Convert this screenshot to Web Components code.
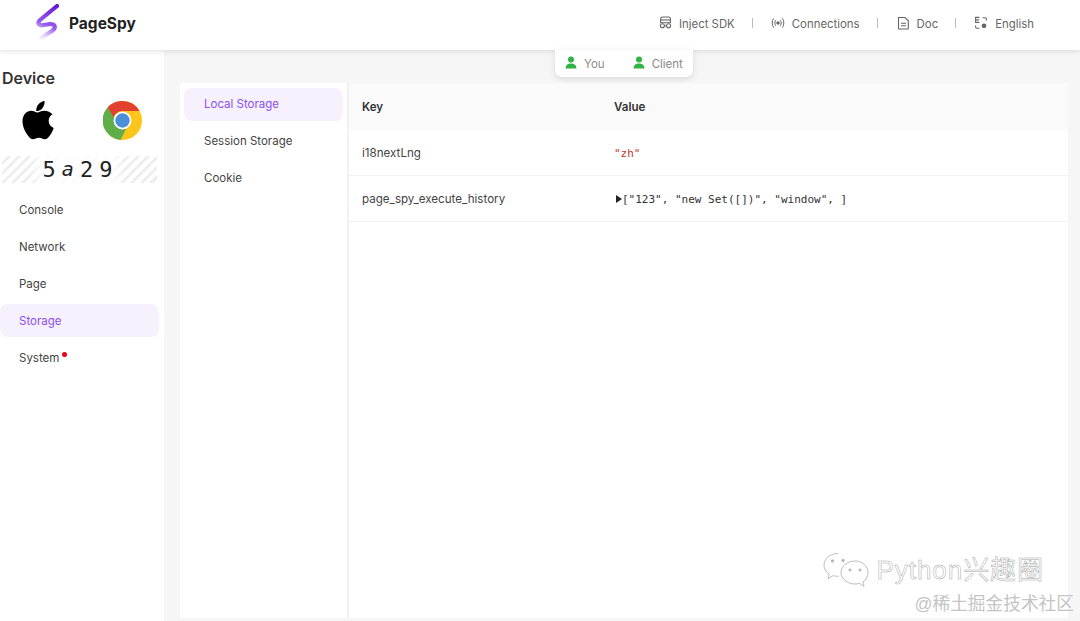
<!DOCTYPE html>
<html><head><meta charset="utf-8"><style>
html,body{margin:0;padding:0;height:100%}
body{width:1080px;height:621px;overflow:hidden;background:#f6f6f6;font-family:Inter,"Liberation Sans",sans-serif;color:#333}
</style></head><body>
<spy-app></spy-app>
<script>
const ICONS={
sdk:'<svg width="13" height="13" viewBox="0 0 13 13" fill="none" stroke="#666" stroke-width="1.1"><path d="M1.600 6.800V3a2 2 0 0 1 2-2h5.800a2 2 0 0 1 2 2v3.800z"/><path d="M1.600 4h9.800"/><circle cx="3.400" cy="9.800" r="2"/><circle cx="9.600" cy="9.800" r="2"/><path d="M5.400 9.800h2.200"/></svg>',
conn:'<svg width="14" height="14" viewBox="0 0 14 14" fill="none" stroke="#666" stroke-width="1"><path d="M2.600 2.400C.7 5 .7 9 2.600 11.600M11.400 2.400c1.900 2.600 1.900 6.600 0 9.200M4.700 4.200c-1.100 1.700-1.100 3.900 0 5.600M9.300 4.200c1.100 1.700 1.100 3.900 0 5.600"/><circle cx="7" cy="7" r="1.200" fill="#666"/></svg>',
doc:'<svg width="13" height="14" viewBox="0 0 13 14" fill="none" stroke="#666" stroke-width="1.1"><path d="M1.500 1.500h6.500l3.300 3.300v7.400a.8.8 0 0 1-.8.8H2.300a.8.8 0 0 1-.8-.8z"/><path d="M4 7.200h5M4 9.800h5"/></svg>',
lang:'<svg width="14" height="14" viewBox="0 0 14 14" fill="none" stroke="#666" stroke-width="1.1"><path d="M5.400 1.400H1.600v5h3.800M1.600 3.900h3.400M8.600 1.800h2.600a1.200 1.200 0 0 1 1.200 1.200v1.400M5.400 12.200H2.800a1.200 1.200 0 0 1-1.200-1.200V9.400"/><circle cx="10" cy="9.800" r="2.400" fill="#666" stroke="none"/></svg>'};
function def(name,css,html){
  customElements.define(name,class extends HTMLElement{
    constructor(){super();const r=this.attachShadow({mode:'open'});
      r.innerHTML='<style>'+css+'</style>'+(typeof html==='function'?html(this):html);}
  });
}
def('spy-logo',':host{display:flex;align-items:center;gap:10px;padding-left:36px}b{font:700 15.5px Inter,"Liberation Sans",sans-serif;color:#222}svg{display:block;margin-top:-3px}',
`<svg width="23" height="36" viewBox="0 0 23 36" fill="none" stroke-linecap="round" stroke-linejoin="round"><defs><linearGradient id="g" gradientUnits="userSpaceOnUse" x1="5" y1="35" x2="21" y2="2"><stop offset="0" stop-color="#c9aef5" stop-opacity=".15"/><stop offset=".4" stop-color="#9a5cf0"/><stop offset="1" stop-color="#6518d6"/></linearGradient></defs><path d="M21 2 4 16C0 20 4 22 8 21L14 20C20 20 20 24 16 27L5 34" stroke="url(#g)" stroke-width="4.200"/></svg><b>PageSpy</b>`);
def('nav-item',':host{display:flex;align-items:center;gap:7px;font-size:11.4px;color:#666}span{display:block}svg{display:block;margin-top:-2px}',
 h=>ICONS[h.getAttribute('icon')]+'<span><slot></slot></span>');
def('spy-header',':host{display:flex;justify-content:space-between;align-items:center;height:50px;padding-bottom:4px;background:#fff;box-shadow:0 1px 6px rgba(0,0,0,.13);position:relative;z-index:2;box-sizing:border-box}.n{display:flex;align-items:center;padding-right:46px;margin-top:1px}i{display:block;width:1px;height:10px;background:#bbb;margin:-1px 0 0 0}',
 `<spy-logo></spy-logo><div class="n"><nav-item icon="sdk">Inject SDK</nav-item><i style="margin-left:17px;margin-right:18px"></i><nav-item icon="conn">Connections</nav-item><i style="margin-left:17px;margin-right:19px"></i><nav-item icon="doc">Doc</nav-item><i style="margin-left:17px;margin-right:18px"></i><nav-item icon="lang">English</nav-item></div>`);
def('side-item',':host{display:flex;align-items:center;height:33px;margin-bottom:4px;padding-left:19px;font-size:11.5px;color:#444;border-radius:8px;position:relative}:host([active]){background:#f7f1fe;color:#8a4fee}sup{display:block;width:5px;height:5px;border-radius:50%;background:#e8000f;margin:-7px 0 0 3px}',
 h=>'<span><slot></slot></span>'+(h.hasAttribute('dot')?'<sup></sup>':''));
def('spy-sidebar',':host{display:block;width:164px;background:#fff;flex:none;box-sizing:border-box;padding-top:19px}h2{margin:0 0 0 2px;font:600 16px/19px Inter,"Liberation Sans",sans-serif;color:#333}.ic{display:flex;justify-content:space-between;padding:11px 22px 0 22px;align-items:flex-end;height:41px;box-sizing:content-box}.ic svg{display:block}.id{margin:16px 7px 0 2px;height:27px;display:flex;align-items:center;justify-content:center;background:repeating-linear-gradient(135deg,#fff 0 4px,#eee 4px 7px);padding-right:4px}.t{display:flex;gap:6px;padding:0 14px;font:22px/27px "DejaVu Sans Mono","Liberation Mono",monospace;color:#222;background:linear-gradient(90deg,rgba(255,255,255,0),rgba(255,255,255,.8) 14px,rgba(255,255,255,.8) calc(100% - 14px),rgba(255,255,255,0))}.l{margin:10px 5px 0 0}',
 `<h2>Device</h2><div class="ic"><svg width="32" height="40" viewBox="0 0 33 41"><path fill="#000" d="M23.300 1c.3 3-.8 5.500-2.300 7.300-1.600 1.900-4 3.200-6.300 3-.3-2.700.9-5.400 2.300-7 1.600-1.800 4.200-3.200 6.300-3.300zM31.500 14.500c-2.600 1.600-4 4-4 6.900 0 3.500 2.100 6.300 5.200 7.400-1 3-2.300 5.500-4.100 8-1.500 2-3 3.500-5.100 3.500-2.200 0-3.300-1.400-6-1.400-2.800 0-3.900 1.400-6 1.400-2.200 0-3.800-1.700-5.400-3.900C2.700 32.300.5 26.500.5 22c0-7 4.500-11 9-11 2.500 0 4.700 1.700 6.400 1.700 1.600 0 4-1.800 7-1.800 2.900 0 6.100 1 8.600 3.600z"/></svg>
 <svg width="39" height="39" viewBox="0 0 39 39"><circle cx="19.500" cy="19.500" r="19.500" fill="#fbc619"/><path fill="#e2412f" d="M19.500 0A19.500 19.500 0 0 1 36.500 10H19.500a9.500 9.500 0 0 0-9.200 7L4.500 6.500A19.500 19.500 0 0 1 19.500 0z"/><path fill="#5fae4a" d="M4.500 6.500 13 19.500a9 9 0 0 0 10 8.500L17.500 38.900A19.500 19.500 0 0 1 4.500 6.500z"/><circle cx="19.500" cy="19.500" r="9" fill="#fff"/><circle cx="19.500" cy="19.500" r="7.200" fill="#4a8fd8"/></svg></div>
 <div class="id"><div class="t"><span>5</span><span style="font-style:italic;font-size:20px">a</span><span>2</span><span>9</span></div></div>
 <div class="l"><side-item>Console</side-item><side-item>Network</side-item><side-item>Page</side-item><side-item active>Storage</side-item><side-item dot>System</side-item></div>`);
def('sub-item',':host{display:flex;align-items:center;height:33px;box-sizing:border-box;padding-bottom:2px;margin-bottom:4px;padding-left:20px;font-size:11.5px;color:#444;border-radius:8px}:host([active]){background:#f7f1fe;color:#8a4fee}','<slot></slot>');
def('storage-list',':host{display:block;width:169px;flex:none;box-sizing:border-box;padding:5px 4px 0 4px;background:#fff;border-right:2px solid #f2f2f2}',
 '<sub-item active>Local Storage</sub-item><sub-item>Session Storage</sub-item><sub-item>Cookie</sub-item>');
def('kv-row',':host{display:grid;grid-template-columns:252px 1fr;align-items:center;height:45px;padding-left:13px;border-bottom:1px solid #f2f2f2;font-size:11.6px;color:#444}:host([head]){height:47px;background:#fafafa;border-bottom:none;font-weight:600;color:#333}','<div><slot name="k"></slot></div><div><slot name="v"></slot></div>');
def('kv-val',':host{display:flex;align-items:center;margin-top:1px;font:11px "DejaVu Sans Mono","Liberation Mono",monospace;color:#333}:host([str]){color:#c0392b}i{display:block;width:0;height:0;border-left:6px solid #222;border-top:4px solid transparent;border-bottom:4px solid transparent;margin:0 0 0 2px}',
 h=>(h.hasAttribute('arrow')?'<i></i>':'')+'<slot></slot>');
def('storage-table',':host{display:block;flex:1;background:#fff}',
 `<kv-row head><span slot="k">Key</span><span slot="v">Value</span></kv-row>
 <kv-row><span slot="k">i18nextLng</span><kv-val slot="v" str>"zh"</kv-val></kv-row>
 <kv-row><span slot="k">page_spy_execute_history</span><kv-val slot="v" arrow>["123", "new Set([])", "window", ]</kv-val></kv-row>`);
def('role-tag',':host{display:flex;align-items:center;gap:7px;font-size:11.5px;color:#8a8a8a}svg{display:block;margin-top:-2px}span{display:block;margin-top:1px}',
 `<svg width="12" height="13" viewBox="0 0 12 13" fill="#2fb344"><circle cx="6" cy="3.400" r="3"/><path d="M.6 12.500c0-3.600 2.200-5 5.400-5s5.400 1.400 5.400 5z"/></svg><span><slot></slot></span>`);
def('role-pop',':host{position:absolute;left:555px;top:50px;z-index:3;display:flex;gap:28px;height:27px;align-items:center;padding:0 10px 0 10px;background:#fff;border-radius:0 0 7px 7px;box-shadow:0 2px 6px rgba(0,0,0,.12)}','<role-tag>You</role-tag><role-tag>Client</role-tag>');
def('wx-mark',':host{position:absolute;right:6px;bottom:8px;z-index:4;display:flex;flex-direction:column;align-items:flex-end;gap:7px;font-family:"Liberation Sans","Noto Sans CJK SC",sans-serif}.a{display:flex;align-items:center;gap:6px;font-size:26px;line-height:30px;color:#fff;-webkit-text-stroke:.5px #a8a8a8;margin-right:30px;letter-spacing:.95px}.b{font-size:17.700px;line-height:18px;color:#c4c4c4}svg{display:block}',
 `<div class="a"><svg width="48" height="36" viewBox="0 0 48 36" fill="#fff" stroke="#b5b5b5" stroke-width=".9"><path d="M15 1.500C7.500 1.500 1 6.500 1 13c0 3.700 2 6.800 5 8.800L5 26.500l5.300-2.800c1.600.4 3.300.6 5 .6"/><path d="M32 9C24.500 9 18 14 18 20.500S24.500 32 32 32c1.600 0 3.100-.2 4.500-.6l4.600 2.900-1.200-4.300c3-2.100 5.100-5.400 5.100-9.500C45 14 39 9 32 9z"/><circle cx="9.500" cy="9" r="1.200" fill="#b5b5b5"/><circle cx="20" cy="8.500" r="1.200" fill="#b5b5b5"/><circle cx="27" cy="18" r="1.100" fill="#b5b5b5"/><circle cx="37" cy="18" r="1.100" fill="#b5b5b5"/></svg><span>Python兴趣圈</span></div><div class="b">@稀土掘金技术社区</div>`);
def('spy-app',':host{display:flex;flex-direction:column;width:1080px;height:621px;position:relative;overflow:hidden}.m{flex:1;display:flex;min-height:0}.c{flex:1;display:flex;margin:33px 12px 3px 16px;background:#fff;min-width:0}',
 `<spy-header></spy-header><role-pop></role-pop><div class="m"><spy-sidebar></spy-sidebar><div class="c"><storage-list></storage-list><storage-table></storage-table></div></div><wx-mark></wx-mark>`);
</script></body></html>
